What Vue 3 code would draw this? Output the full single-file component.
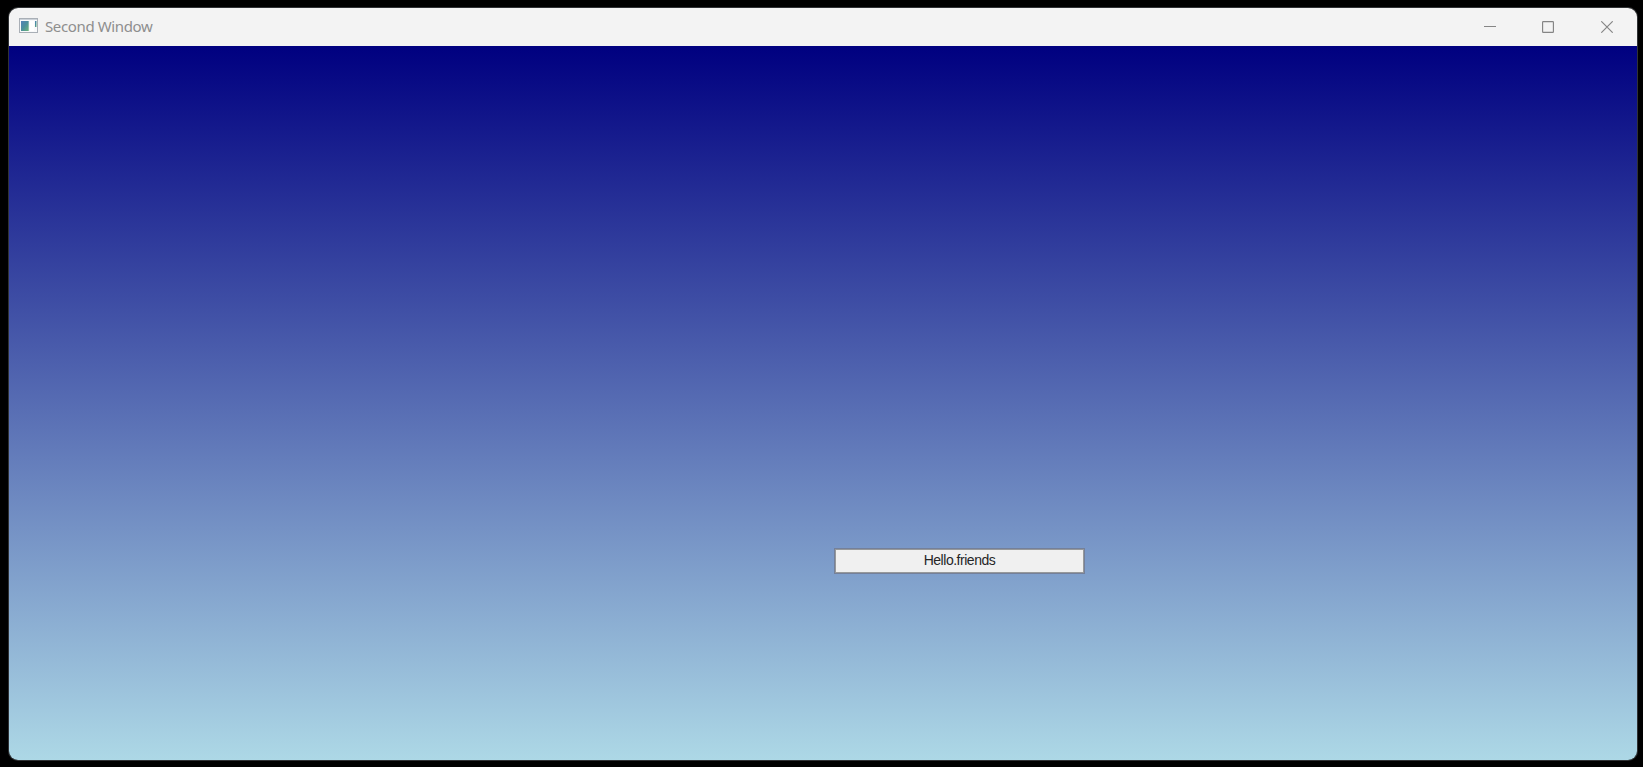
<script setup>
const title = 'Second Window'
const label = 'Hello.friends'
</script>

<template>
  <div class="desktop">
    <section class="window">
      <header class="titlebar">
        <svg class="app-icon" width="19" height="16" viewBox="0 0 19 16">
          <defs>
            <linearGradient id="pane" x1="0" y1="0" x2="1" y2="1">
              <stop offset="0" stop-color="#5180b8" />
              <stop offset=".5" stop-color="#4b909b" />
              <stop offset="1" stop-color="#6cb578" />
            </linearGradient>
          </defs>
          <rect x=".5" y=".5" width="18" height="14" fill="#f8f9fa" stroke="#a9afb6" />
          <path d="M1 1.5H18" stroke="#cbd1d8" />
          <rect x="2" y="3" width="7.7" height="10" fill="url(#pane)" />
          <rect x="11" y="3" width="4" height="10" fill="#fff" />
          <rect x="16" y="3" width="1.5" height="6" fill="url(#pane)" />
        </svg>
        <span class="title">{{ title }}</span>
        <div class="controls">
          <button class="control" aria-label="Minimize">
            <svg width="12" height="12" viewBox="0 0 12 12"><path d="M0 5.5H12" /></svg>
          </button>
          <button class="control" aria-label="Maximize">
            <svg width="12" height="12" viewBox="0 0 12 12"><rect x=".6" y=".6" width="10.8" height="10.8" rx=".6" /></svg>
          </button>
          <button class="control close" aria-label="Close">
            <svg width="12" height="12" viewBox="0 0 12 12"><path d="M.3 .3L11.7 11.7M11.7 .3L.3 11.7" /></svg>
          </button>
        </div>
      </header>
      <main class="client">
        <div class="label"><span class="label-text">{{ label }}</span></div>
      </main>
    </section>
  </div>
</template>

<style>
body { margin: 0; background: #000; overflow: hidden; }
</style>

<style scoped>
.desktop {
  box-sizing: border-box;
  width: 1643px;
  height: 767px;
  padding: 8px 5px 6px 9px;
  background: #000;
}
.window {
  display: flex;
  flex-direction: column;
  height: 752px;
  width: 1628px;
  border-radius: 9px;
  overflow: hidden;
  box-shadow: 0 0 0 1px #303235;
}
.titlebar {
  display: flex;
  align-items: center;
  height: 38px;
  flex: none;
  background: #f3f3f3;
  color: #8e8e8e;
  font-family: "Noto Sans", "Open Sans", sans-serif;
  font-size: 15px;
}
.app-icon { margin: 0 7px 2px 10px; }
.title {
  width: 108px;
  line-height: 20px;
  margin-bottom: 3px;
  letter-spacing: -.37px;
  white-space: nowrap;
}
.controls { display: flex; margin-left: auto; }
.control {
  display: flex;
  align-items: center;
  justify-content: center;
  width: 58px;
  height: 38px;
  padding: 0;
  border: 0;
  background: none;
}
.control.close { width: 60px; }
.control svg { fill: none; stroke: #858585; stroke-width: 1.15; }
.client {
  flex: 1;
  background: linear-gradient(#000080, #add8e6);
}
.label {
  box-sizing: border-box;
  display: flex;
  justify-content: center;
  width: 251px;
  height: 26px;
  margin: 502px 0 0 825px;
  border: 1px solid #74809a;
  background: #f0f0f0;
  box-shadow: inset 0 0 0 1px #97999a;
}
.label-text {
  color: #262626;
  font: 14px/23px "Liberation Sans", Arial, sans-serif;
  letter-spacing: -.47px;
  white-space: nowrap;
}
</style>
